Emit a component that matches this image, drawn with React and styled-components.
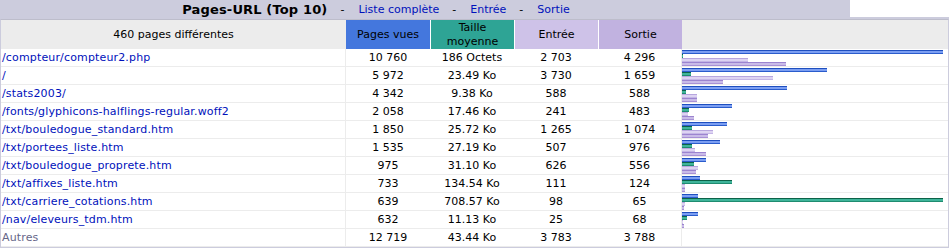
import React from "react";
import styled, { createGlobalStyle } from "styled-components";

const Global = createGlobalStyle`
  html, body { margin: 0; padding: 0; background: #fff; }
  body {
    font-family: "DejaVu Sans", Verdana, sans-serif;
    font-size: 11px;
    color: #000;
  }
`;

const COLS = "345px 84px 84px 84px 84px 1fr";

const Wrap = styled.div`
  width: 949px;
`;

const TitleRow = styled.div`
  display: flex;
  align-items: flex-start;
`;

const TitleCell = styled.div`
  width: 850px;
  height: 19px;
  box-sizing: border-box;
  background: #ccccdd;
  display: flex;
  align-items: center;
  justify-content: center;
  padding-right: 98px;
  white-space: nowrap;
`;

const TitleText = styled.b`
  font-size: 13px;
  font-weight: bold;
  letter-spacing: 0.15px;
`;

const Sep = styled.span`
  padding: 0 14px 0 13px;
  font-size: 11px;
`;

const TitleLink = styled.a`
  color: #0011bb;
  text-decoration: none;
  font-size: 11px;
`;

const Blank = styled.div`
  flex: 1;
  height: 17px;
  background: #fff;
  border-bottom: 2px solid #ccccdd;
`;

const Table = styled.div`
  border: 1px solid #ccccdd;
  border-top-color: #bdbdcb;
`;

const HeadRow = styled.div`
  display: grid;
  grid-template-columns: ${COLS};
  height: 29px;
  background: #ececec;
`;

const HeadCell = styled.div`
  display: flex;
  align-items: center;
  justify-content: center;
  text-align: center;
  line-height: 14px;
  background: ${(p) => p.$bg || "#ececec"};
  border-left: ${(p) => (p.$sep ? "1px solid #fff" : "none")};
`;

const Row = styled.div`
  display: grid;
  grid-template-columns: ${COLS};
  height: 18px;
  box-sizing: border-box;
  border-bottom: 1px solid #ececec;
`;

const UrlCell = styled.div`
  padding-left: 1px;
  border-right: 1px solid #ececec;
  display: flex;
  align-items: center;
  white-space: nowrap;
  overflow: hidden;
  letter-spacing: 0.15px;
  color: ${(p) => (p.$other ? "#666688" : "#0011bb")};
`;

const Num = styled.div`
  display: flex;
  align-items: center;
  justify-content: center;
  white-space: nowrap;
  border-right: ${(p) => (p.$last ? "1px solid #ececec" : "none")};
`;

const GraphCell = styled.div`
  display: flex;
  flex-direction: column;
  justify-content: flex-end;
  align-items: flex-start;
`;

const BAR = {
  p: "linear-gradient(to bottom, #1f4fbf 0 1px, #7b9ef2 1px 3px, #2a5ccc 3px 4px)",
  k: "linear-gradient(to bottom, #0d6248 0 1px, #3fb49a 1px 3px, #1f8c70 3px 4px)",
  e: "linear-gradient(to bottom, #b7a6de 0 1px, #ddd3f2 1px 3px, #c4b6e6 3px 4px)",
  x: "linear-gradient(to bottom, #9c84cf 0 1px, #c9bbe8 1px 3px, #a891d6 3px 4px)",
};

const Bar = styled.div`
  height: 4px;
  background: ${(p) => BAR[p.$kind]};
`;

const rows = [
  ["/compteur/compteur2.php", "10 760", 10760, "186 Octets", 0.18, "2 703", 2703, "4 296", 4296],
  ["/", "5 972", 5972, "23.49 Ko", 23.49, "3 730", 3730, "1 659", 1659],
  ["/stats2003/", "4 342", 4342, "9.38 Ko", 9.38, "588", 588, "588", 588],
  ["/fonts/glyphicons-halflings-regular.woff2", "2 058", 2058, "17.46 Ko", 17.46, "241", 241, "483", 483],
  ["/txt/bouledogue_standard.htm", "1 850", 1850, "25.72 Ko", 25.72, "1 265", 1265, "1 074", 1074],
  ["/txt/portees_liste.htm", "1 535", 1535, "27.19 Ko", 27.19, "507", 507, "976", 976],
  ["/txt/bouledogue_proprete.htm", "975", 975, "31.10 Ko", 31.1, "626", 626, "556", 556],
  ["/txt/affixes_liste.htm", "733", 733, "134.54 Ko", 134.54, "111", 111, "124", 124],
  ["/txt/carriere_cotations.htm", "639", 639, "708.57 Ko", 708.57, "98", 98, "65", 65],
  ["/nav/eleveurs_tdm.htm", "632", 632, "11.13 Ko", 11.13, "25", 25, "68", 68],
];

const MAXW = 260;
const wP = (v) => Math.floor((v * MAXW) / 10760) + 1;
const wK = (v) => Math.floor((v * MAXW) / 708.57) + 1;

export default function App() {
  return (
    <Wrap>
      <Global />
      <TitleRow>
        <TitleCell>
          <TitleText>Pages-URL (Top 10)</TitleText>
          <Sep>-</Sep>
          <TitleLink href="#">Liste complète</TitleLink>
          <Sep>-</Sep>
          <TitleLink href="#">Entrée</TitleLink>
          <Sep>-</Sep>
          <TitleLink href="#">Sortie</TitleLink>
        </TitleCell>
        <Blank />
      </TitleRow>
      <Table>
        <HeadRow>
          <HeadCell>460 pages différentes</HeadCell>
          <HeadCell $bg="#4477dd">Pages vues</HeadCell>
          <HeadCell $bg="#2ea495" $sep>
            Taille
            <br />
            moyenne
          </HeadCell>
          <HeadCell $bg="#cec2e8" $sep>Entrée</HeadCell>
          <HeadCell $bg="#c1b2e0" $sep>Sortie</HeadCell>
          <HeadCell />
        </HeadRow>
        {rows.map((r) => (
          <Row key={r[0]}>
            <UrlCell>{r[0]}</UrlCell>
            <Num>{r[1]}</Num>
            <Num>{r[3]}</Num>
            <Num>{r[5]}</Num>
            <Num $last>{r[7]}</Num>
            <GraphCell>
              <Bar $kind="p" style={{ width: wP(r[2]) }} />
              <Bar $kind="k" style={{ width: wK(r[4]) }} />
              <Bar $kind="e" style={{ width: wP(r[6]) }} />
              <Bar $kind="x" style={{ width: wP(r[8]) }} />
            </GraphCell>
          </Row>
        ))}
        <Row>
          <UrlCell $other>Autres</UrlCell>
          <Num>12 719</Num>
          <Num>43.44 Ko</Num>
          <Num>3 783</Num>
          <Num $last>3 788</Num>
          <GraphCell />
        </Row>
      </Table>
    </Wrap>
  );
}
